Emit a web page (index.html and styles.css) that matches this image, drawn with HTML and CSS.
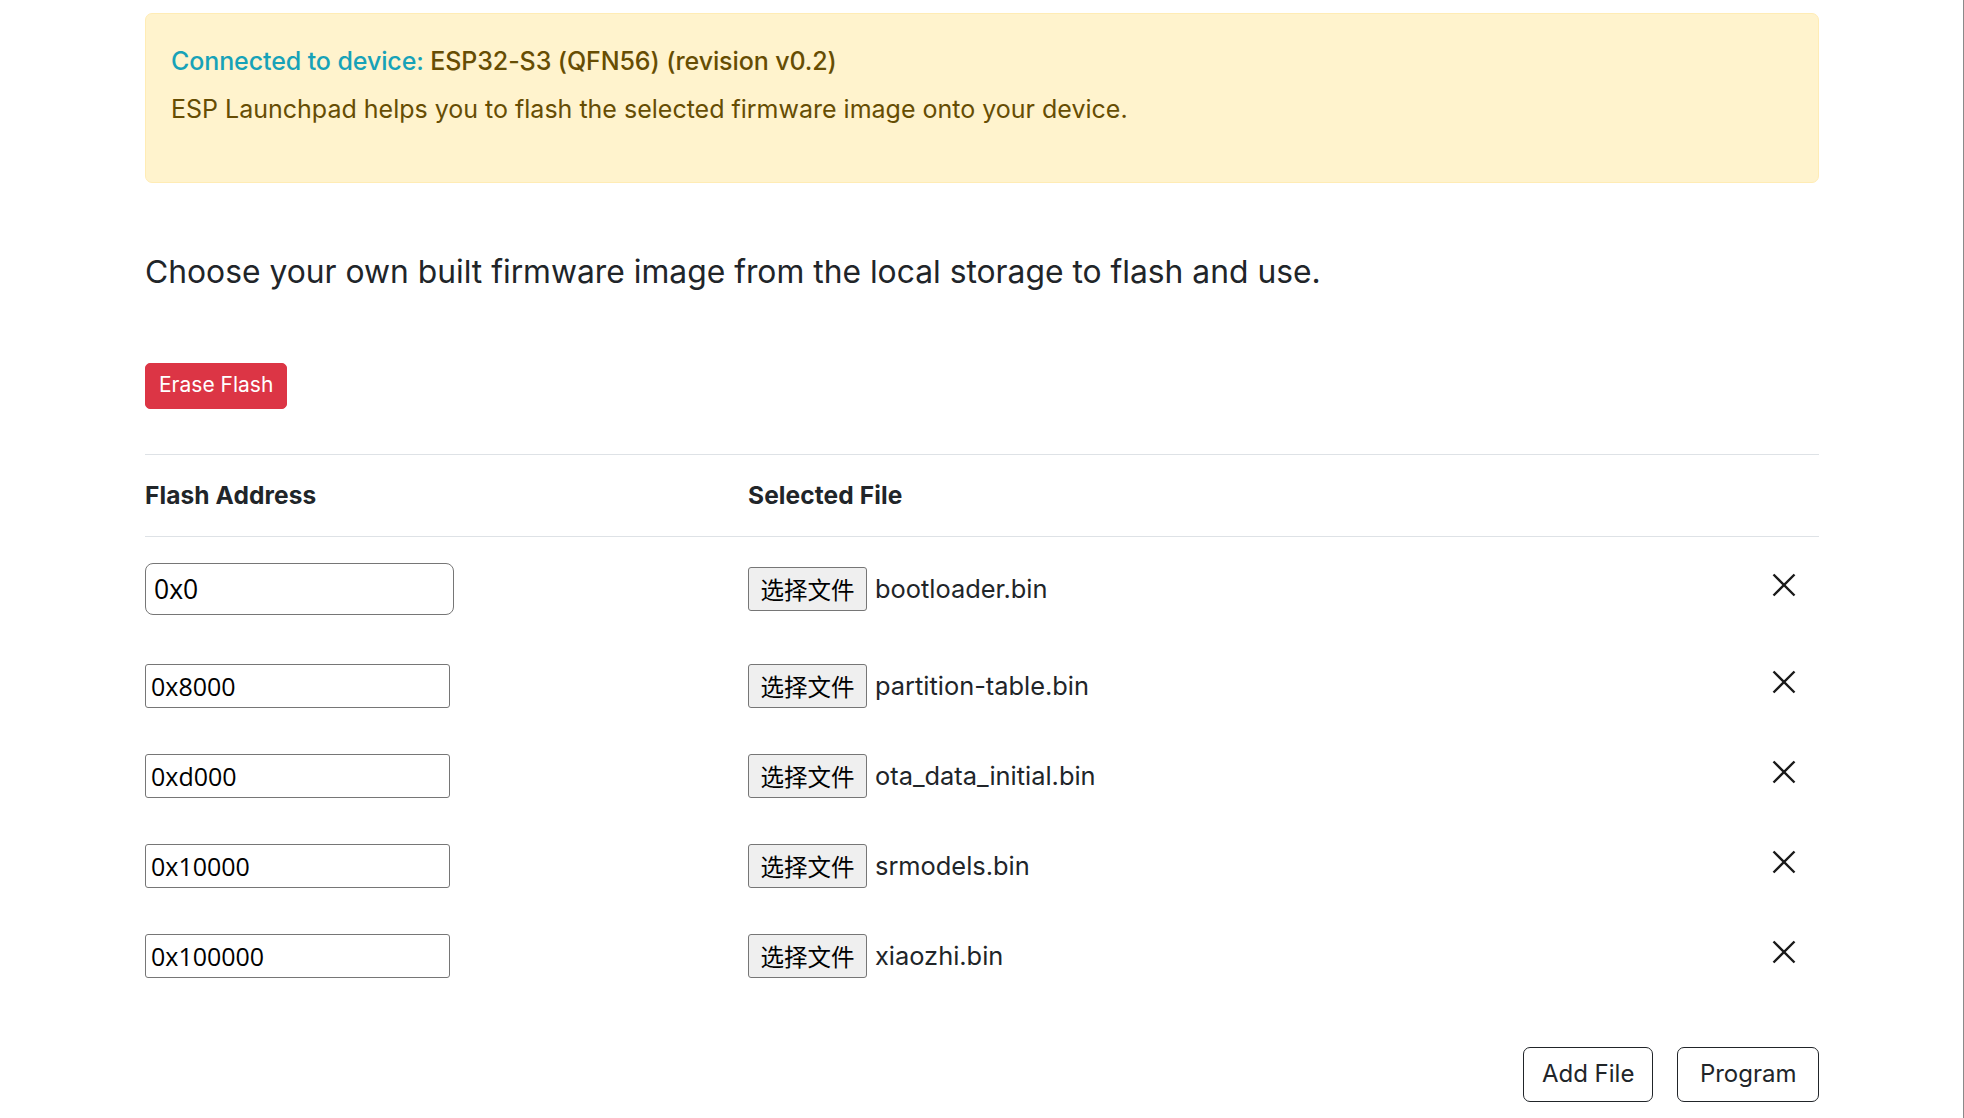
FILE: index.html
```html
<!DOCTYPE html>
<html lang="en">
<head>
<meta charset="utf-8">
<title>ESP Launchpad</title>
<link rel="stylesheet" href="styles.css">
</head>
<body>
<div class="container">
  <div class="alert">
    <h5 class="alert-title"><span class="info">Connected to device:</span> ESP32-S3 (QFN56) (revision v0.2)</h5>
    <p class="alert-text">ESP Launchpad helps you to flash the selected firmware image onto your device.</p>
  </div>

  <p class="lead">Choose your own built firmware image from the local storage to flash and use.</p>

  <button class="btn btn-danger" type="button">Erase Flash</button>

  <div class="flash-table">
    <div class="trow thead">
      <div class="th">Flash Address</div>
      <div class="th">Selected File</div>
      <div class="th"></div>
    </div>

    <div class="trow first">
      <div class="td"><input class="addr addr-first" type="text" value="0x0"></div>
      <div class="td file"><button class="file-btn" type="button">选择文件</button><span class="file-name">bootloader.bin</span></div>
      <div class="td close"><svg class="x-icon" viewBox="0 0 24 24" aria-hidden="true"><path d="M1.5 1.5 L22.5 22.5 M22.5 1.5 L1.5 22.5"/></svg></div>
    </div>

    <div class="trow">
      <div class="td"><input class="addr" type="text" value="0x8000"></div>
      <div class="td file"><button class="file-btn" type="button">选择文件</button><span class="file-name">partition-table.bin</span></div>
      <div class="td close"><svg class="x-icon" viewBox="0 0 24 24" aria-hidden="true"><path d="M1.5 1.5 L22.5 22.5 M22.5 1.5 L1.5 22.5"/></svg></div>
    </div>

    <div class="trow">
      <div class="td"><input class="addr" type="text" value="0xd000"></div>
      <div class="td file"><button class="file-btn" type="button">选择文件</button><span class="file-name">ota_data_initial.bin</span></div>
      <div class="td close"><svg class="x-icon" viewBox="0 0 24 24" aria-hidden="true"><path d="M1.5 1.5 L22.5 22.5 M22.5 1.5 L1.5 22.5"/></svg></div>
    </div>

    <div class="trow">
      <div class="td"><input class="addr" type="text" value="0x10000"></div>
      <div class="td file"><button class="file-btn" type="button">选择文件</button><span class="file-name">srmodels.bin</span></div>
      <div class="td close"><svg class="x-icon" viewBox="0 0 24 24" aria-hidden="true"><path d="M1.5 1.5 L22.5 22.5 M22.5 1.5 L1.5 22.5"/></svg></div>
    </div>

    <div class="trow">
      <div class="td"><input class="addr" type="text" value="0x100000"></div>
      <div class="td file"><button class="file-btn" type="button">选择文件</button><span class="file-name">xiaozhi.bin</span></div>
      <div class="td close"><svg class="x-icon" viewBox="0 0 24 24" aria-hidden="true"><path d="M1.5 1.5 L22.5 22.5 M22.5 1.5 L1.5 22.5"/></svg></div>
    </div>
  </div>

  <div class="actions">
    <button class="btn btn-outline" type="button">Add File</button>
    <button class="btn btn-outline btn-wide" type="button">Program</button>
  </div>
</div>
</body>
</html>
```
FILE: styles.css
```css
html {
  overflow: hidden;
}

body {
  margin: 0;
  background: #ffffff;
  color: #212529;
  font-family: "Inter", "Noto Sans", sans-serif;
  font-size: 25px;
  line-height: 1.5;
}

body::after {
  content: "";
  position: fixed;
  top: 0;
  right: 0;
  width: 1px;
  height: 100%;
  background: #8a8a8a;
}

.container {
  width: 1674px;
  margin: 0 auto;
}

/* Alert */
.alert {
  margin-top: 13px;
  padding: 28.5px 25px 23.5px;
  background: #fff3cd;
  border: 1px solid #ffecb5;
  border-radius: 7px;
  color: #664d03;
}

.alert-title {
  margin: 0 0 10.5px;
  font-size: 25px;
  font-weight: 500;
  line-height: 37.5px;
  letter-spacing: -0.1px;
}

.info {
  color: #17a2b8;
}

.alert-text {
  margin: 0 0 30px;
  font-size: 25px;
  line-height: 37.5px;
}

/* Lead */
.lead {
  margin: 65px 0 67.5px;
  font-size: 31.8px;
  line-height: 48px;
  font-weight: 400;
}

/* Buttons */
.btn {
  display: inline-flex;
  align-items: center;
  justify-content: center;
  font-family: "Inter", "Noto Sans", sans-serif;
  cursor: pointer;
}

.btn-danger {
  height: 45.5px;
  padding: 0 13px 2px;
  background: #dc3545;
  border: 1px solid #dc3545;
  border-radius: 5px;
  color: #ffffff;
  font-size: 21px;
}

.btn-outline {
  height: 55px;
  padding: 0 18px 2px;
  background: #ffffff;
  border: 1px solid #212529;
  border-radius: 7px;
  color: #212529;
  font-size: 24px;
}

.btn-wide {
  padding: 0 21.5px 2px;
}

/* Table */
.flash-table {
  margin-top: 45.5px;
}

.trow {
  display: grid;
  grid-template-columns: 603px 1fr 60px;
  align-items: center;
  padding: 23px 0;
}

.trow.thead {
  padding: 0;
  height: 81px;
  border-top: 1px solid #dee2e6;
  border-bottom: 1px solid #dee2e6;
}

.trow.first {
  padding: 26.3px 0 26px;
}

.th {
  font-size: 24.5px;
  font-weight: 700;
  line-height: 36px;
  letter-spacing: 0.1px;
  padding-bottom: 2px;
}

.td {
  display: flex;
  align-items: center;
}

.addr {
  box-sizing: border-box;
  width: 305px;
  height: 44px;
  margin: 0;
  padding: 0 5px;
  border: 1px solid #767676;
  border-radius: 3px;
  background: #ffffff;
  color: #000000;
  font-family: "Open Sans", "Noto Sans", sans-serif;
  font-size: 25px;
  outline: none;
}

.addr-first {
  width: 309px;
  height: 52px;
  padding: 0 8px;
  border-radius: 8px;
  font-size: 26.5px;
}

.file-btn {
  box-sizing: border-box;
  height: 44px;
  width: 119px;
  margin: 0 8px 0 0;
  padding: 0;
  border: 1px solid #767676;
  border-radius: 3px;
  background: #efefef;
  color: #000000;
  font-family: "Noto Sans CJK SC", sans-serif;
  font-size: 23.5px;
  line-height: 1;
}

.file-name {
  font-size: 25.4px;
  line-height: 36px;
  color: #212529;
}

.close {
  justify-content: flex-end;
  padding-right: 23px;
}

.x-icon {
  width: 24px;
  height: 24px;
  margin-bottom: 9px;
  fill: none;
  stroke: #1a1a1a;
  stroke-width: 2.4;
}

/* Actions */
.actions {
  display: flex;
  justify-content: flex-end;
  gap: 24px;
  margin-top: 45.7px;
}
```
